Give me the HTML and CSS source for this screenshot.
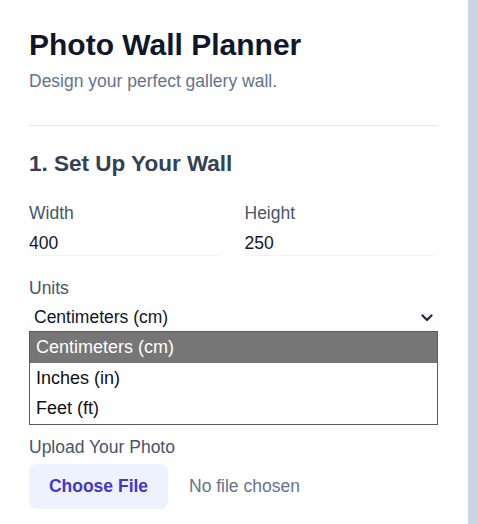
FILE: index.html
```html
<!DOCTYPE html>
<html lang="en">
<head>
<meta charset="utf-8">
<title>Photo Wall Planner</title>
<link rel="stylesheet" href="styles.css">
</head>
<body>
<div class="layout">
  <aside class="panel">
    <header class="intro">
      <h1 class="title">Photo Wall Planner</h1>
      <p class="subtitle">Design your perfect gallery wall.</p>
    </header>
    <section class="section">
      <h2 class="section-title">1. Set Up Your Wall</h2>
      <div class="dims">
        <label class="field">
          <span class="label">Width</span>
          <input class="input" type="text" value="400">
        </label>
        <label class="field">
          <span class="label">Height</span>
          <input class="input" type="text" value="250">
        </label>
      </div>
      <div class="field units">
        <span class="label">Units</span>
        <div class="select-wrap">
          <div class="select">Centimeters (cm)</div>
          <svg class="chevron" width="12" height="8" viewBox="0 0 12 8"><path d="M1.5 1.5 L6 6 L10.5 1.5" fill="none" stroke="#1e293b" stroke-width="2.2" stroke-linecap="round" stroke-linejoin="round"/></svg>
          <ul class="listbox">
            <li class="option active">Centimeters (cm)</li>
            <li class="option">Inches (in)</li>
            <li class="option">Feet (ft)</li>
          </ul>
        </div>
      </div>
      <div class="field upload">
        <span class="label">Upload Your Photo</span>
        <div class="file-row">
          <span class="file-btn">Choose File</span>
          <span class="file-name">No file chosen</span>
        </div>
      </div>
    </section>
  </aside>
  <main class="canvas"></main>
</div>
</body>
</html>
```

FILE: styles.css
```css
* { box-sizing: border-box; }
html, body { margin: 0; padding: 0; }
body {
  font-family: "Liberation Sans", Arial, sans-serif;
  background: #cbd5e1;
  color: #1e293b;
}
.layout { display: flex; min-height: 524px; }
.panel {
  width: 468px;
  flex: none;
  background: #ffffff;
  padding: 27px 30px 0 29px;
}
.canvas { flex: 1; background: #cbd5e1; }
.title {
  margin: 0;
  font-size: 30px;
  line-height: 36px;
  font-weight: 700;
  color: #0f172a;
}
.subtitle {
  margin: 6px 0 0;
  font-size: 17.5px;
  line-height: 24px;
  color: #64748b;
}
.intro {
  padding-bottom: 32px;
  border-bottom: 1px solid #e5e7eb;
}
.section { padding-top: 24px; }
.section-title {
  margin: 0 0 23px;
  font-size: 22.5px;
  line-height: 28px;
  font-weight: 700;
  color: #334155;
}
.dims {
  display: grid;
  grid-template-columns: 1fr 1fr;
  gap: 22px;
}
.field { display: flex; flex-direction: column; }
.label {
  font-size: 17.5px;
  line-height: 24px;
  color: #475569;
}
.input {
  margin-top: 6px;
  border: 0;
  border-radius: 7px;
  padding: 0;
  height: 24px;
  font: inherit;
  font-size: 17.5px;
  color: #0f172a;
  background: #fff;
  box-shadow: 0 1px 2px rgba(0,0,0,0.06);
  outline: none;
  width: 100%;
}
.units { margin-top: 21px; }
.select-wrap { position: relative; margin-top: 5px; }
.select {
  height: 24px;
  line-height: 24px;
  padding-left: 5px;
  font-size: 17.5px;
  color: #0f172a;
  border-radius: 7px;
  box-shadow: 0 1px 2px rgba(0,0,0,0.06);
}
.chevron { position: absolute; right: 5px; top: 9px; }
.listbox {
  position: absolute;
  left: 0;
  right: 0;
  top: 26px;
  margin: 0;
  padding: 0;
  list-style: none;
  border: 1px solid #5c5c5c;
  background: #fff;
  z-index: 2;
}
.option {
  height: 30.7px;
  line-height: 31px;
  padding-left: 6px;
  font-size: 18px;
  color: #111;
}
.option.active { background: #767676; color: #fff; }
.upload { margin-top: 106px; }
.file-row {
  display: flex;
  align-items: center;
  gap: 21px;
  margin-top: 5px;
}
.file-btn {
  display: inline-flex;
  align-items: center;
  justify-content: center;
  width: 139px;
  height: 45px;
  border-radius: 8px;
  background: #eef2ff;
  color: #4338ca;
  font-weight: 700;
  font-size: 17.5px;
}
.file-name { font-size: 17.5px; color: #64748b; }
```
